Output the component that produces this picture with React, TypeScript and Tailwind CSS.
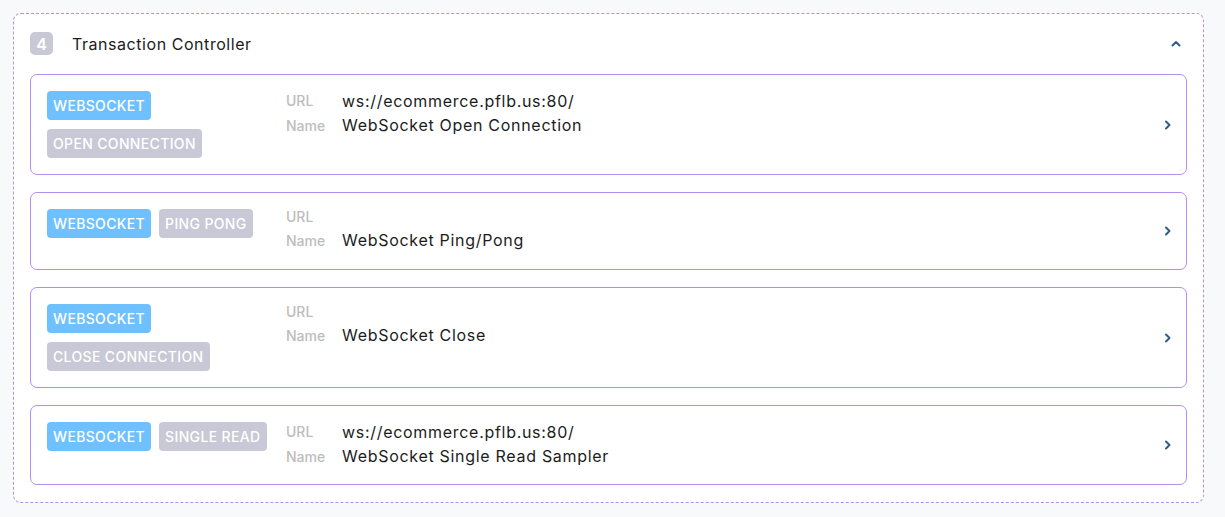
import React from "react";

type Item = { tags: string[]; stacked: boolean; url: string; name: string };

const items: Item[] = [
  { tags: ["OPEN CONNECTION"], stacked: true, url: "ws://ecommerce.pflb.us:80/", name: "WebSocket Open Connection" },
  { tags: ["PING PONG"], stacked: false, url: "", name: "WebSocket Ping/Pong" },
  { tags: ["CLOSE CONNECTION"], stacked: true, url: "", name: "WebSocket Close" },
  { tags: ["SINGLE READ"], stacked: false, url: "ws://ecommerce.pflb.us:80/", name: "WebSocket Single Read Sampler" },
];

function ChevronRight() {
  return (
    <svg width="10" height="12" viewBox="0 0 10 12" fill="none">
      <path d="M3 2.5 L6.5 6 L3 9.5" stroke="#2f5b8f" strokeWidth="2" strokeLinecap="round" strokeLinejoin="round" />
    </svg>
  );
}

function ChevronUp() {
  return (
    <svg width="12" height="10" viewBox="0 0 12 10" fill="none">
      <path d="M2.5 6.5 L6 3 L9.5 6.5" stroke="#2f5b8f" strokeWidth="2" strokeLinecap="round" strokeLinejoin="round" />
    </svg>
  );
}

function Badge({ text, blue }: { text: string; blue?: boolean }) {
  return (
    <span
      className={`inline-flex h-[29px] items-center rounded-[4px] px-[6px] text-[14px] font-medium tracking-[0.35px] text-white ${
        blue ? "bg-[#6ec1fe]" : "bg-[#c8c8d6]"
      }`}
    >
      {text}
    </span>
  );
}

function Card({ item }: { item: Item }) {
  const has = !!item.url;
  return (
    <div className="flex items-center rounded-[7px] border border-[#b58cf0] bg-white pl-[16px] pr-[13px] py-[16px]">
      <div className="flex flex-1 items-start">
        <div className={`flex w-[239px] shrink-0 ${item.stacked ? "flex-col items-start gap-[9px]" : "flex-row gap-[8px]"}`}>
          <Badge text="WEBSOCKET" blue />
          {item.tags.map((t) => (
            <Badge key={t} text={t} />
          ))}
        </div>
        <div className={`grid grid-cols-[56px_1fr] ${has ? "gap-y-[3px]" : "gap-y-[4px]"}`}>
          <div className={`text-[14px] font-medium text-[#bdbdbd] ${has ? "leading-[20px]" : "leading-[15px]"}`}>URL</div>
          <div className={`text-[16px] tracking-[0.7px] text-[#1c1c1c] ${has ? "leading-[20px]" : "leading-[15px]"}`}>{item.url}</div>
          <div className={`text-[14px] font-medium text-[#bdbdbd] ${has ? "leading-[23px]" : "leading-[25px]"}`}>Name</div>
          <div className={`text-[16px] tracking-[0.7px] text-[#1c1c1c] ${has ? "leading-[23px]" : "leading-[25px]"}`}>{item.name}</div>
        </div>
      </div>
      <ChevronRight />
    </div>
  );
}

export default function App() {
  return (
    <div className="min-h-[517px] bg-[#f8f9fa] pl-[13px] pr-[21px] pt-[13px] pb-[13px]" style={{ fontFamily: "Inter, 'Noto Sans', sans-serif" }}>
      <div className="rounded-[8px] border border-dashed border-[#b58cf0] bg-white px-[16px] pb-[17px] pt-[18px]">
        <div className="flex h-[23px] items-center pr-[5px]">
          <span className="flex h-[23px] w-[23px] items-center justify-center rounded-[5px] bg-[#c8c8d6] text-[16px] font-semibold text-white">4</span>
          <span className="ml-[19px] flex-1 text-[16px] tracking-[0.55px] text-[#1c1c1c]">Transaction Controller</span>
          <ChevronUp />
        </div>
        <div className="mt-[19px] flex flex-col gap-[17px]">
          {items.map((it) => (
            <Card key={it.name} item={it} />
          ))}
        </div>
      </div>
    </div>
  );
}
